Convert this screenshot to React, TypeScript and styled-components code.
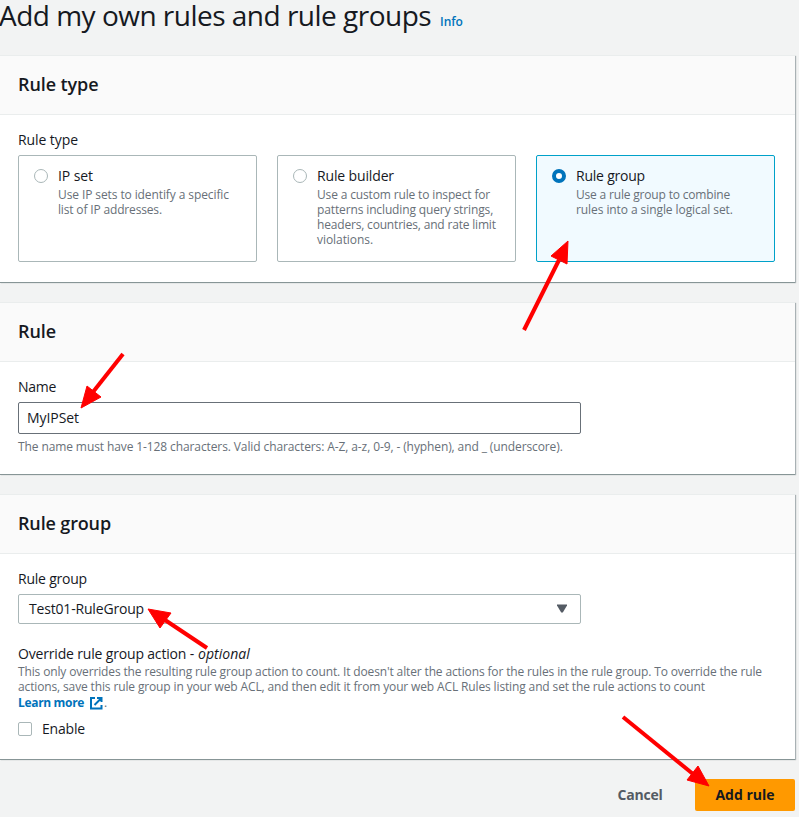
import React from "react";
import styled, { createGlobalStyle } from "styled-components";

const GlobalStyle = createGlobalStyle`
  *, *::before, *::after { box-sizing: border-box; }
  html, body { margin: 0; padding: 0; background: #f2f3f3; overflow: hidden; }
  body {
    color: #16191f;
    font-family: "Open Sans", "Noto Sans", sans-serif;
    font-size: 14px;
    line-height: 22px;
  }
  h1, h2, p { margin: 0; }
`;

const Page = styled.main`
  position: relative;
  width: 799px;
  height: 817px;
  overflow: hidden;
`;

const Track = styled.span<{ $ls: number }>`
  letter-spacing: ${(p) => p.$ls}px;
  white-space: nowrap;
`;

const TitleRow = styled.header`
  display: flex;
  align-items: baseline;
  gap: 9px;
  height: 55px;
  margin-left: -1px;
`;

const PageTitle = styled.h1`
  font-size: 28px;
  font-weight: 400;
  line-height: 31px;
`;

const InfoLink = styled.a`
  color: #0073bb;
  font-size: 12px;
  font-weight: 600;
`;

const Panels = styled.div`
  display: flex;
  flex-direction: column;
  gap: 20px;
  width: 795px;
`;

const Panel = styled.section<{ $height: number }>`
  height: ${(p) => p.$height}px;
  background: #fff;
  border-top: 1px solid #eaeded;
  box-shadow: 0 1px 0 0 #879596, 1px 1px 1px 0 rgba(0, 28, 36, 0.3);
`;

const PanelHeader = styled.div`
  display: flex;
  align-items: center;
  height: 59px;
  padding: 0 18px 2px;
  background: #fafafa;
  border-bottom: 1px solid #eaeded;
`;

const PanelTitle = styled.h2`
  font-size: 18px;
  font-weight: 600;
  line-height: 22px;
`;

const PanelBody = styled.div`
  padding: 14px 20px 0 18px;
`;

const Label = styled.div`
  height: 22px;
  margin-bottom: 4px;
`;

const Tiles = styled.div`
  display: grid;
  grid-template-columns: repeat(3, 239px);
  gap: 20px;
`;

const Tile = styled.label<{ $selected?: boolean }>`
  display: flex;
  gap: 10px;
  height: 107px;
  padding: 9px 15px;
  border: 1px solid ${(p) => (p.$selected ? "#00a1c9" : "#aab7b8")};
  border-radius: 2px;
  background: ${(p) => (p.$selected ? "#f1faff" : "#fff")};
`;

const Radio = styled.span<{ $selected?: boolean }>`
  flex: none;
  width: 14px;
  height: 14px;
  margin-top: 4px;
  border-radius: 50%;
  background: #fff;
  border: ${(p) => (p.$selected ? "4px solid #0073bb" : "1px solid #aab7b8")};
`;

const TileText = styled.div`
  display: flex;
  flex-direction: column;
`;

const Description = styled.p`
  display: flex;
  flex-direction: column;
  color: #687078;
  font-size: 12px;
  line-height: 15px;
`;

const OverrideDescription = styled(Description)`
  margin-top: -1px;
`;

const Input = styled.div`
  display: flex;
  align-items: center;
  width: 563px;
  height: 32px;
  padding: 0 8px;
  border: 1px solid #687078;
  border-radius: 2px;
`;

const Hint = styled(Description)`
  margin-top: 5px;
`;

const Select = styled.div`
  display: flex;
  align-items: center;
  justify-content: space-between;
  width: 563px;
  height: 30px;
  padding: 0 13px 0 10px;
  border: 1px solid #aab7b8;
  border-radius: 2px;
`;

const Caret = styled.svg`
  margin-bottom: 1px;
`;

const OverrideField = styled.div`
  margin-top: 19px;
`;

const OverrideLabel = styled.div`
  display: flex;
  gap: 4px;
  height: 22px;
`;

const LearnRow = styled.div`
  display: flex;
  align-items: center;
  gap: 1px;
  height: 15px;
  margin-top: 1px;
  color: #687078;
  font-size: 12px;
`;

const LearnLink = styled.a`
  display: flex;
  align-items: center;
  gap: 5px;
  color: #0073bb;
  font-weight: 700;
`;

const CheckRow = styled.label`
  display: flex;
  align-items: center;
  gap: 10px;
  height: 22px;
  margin-top: 8px;
`;

const Checkbox = styled.span`
  width: 14px;
  height: 14px;
  border: 1px solid #aab7b8;
  border-radius: 2px;
  background: #fff;
`;

const Actions = styled.footer`
  display: flex;
  justify-content: flex-end;
  gap: 9px;
  width: 795px;
  margin-top: 20px;
`;

const Button = styled.button<{ $primary?: boolean }>`
  height: 32px;
  width: ${(p) => (p.$primary ? 100 : 92)}px;
  padding: 0;
  border: 0;
  border-radius: 2px;
  background: ${(p) => (p.$primary ? "#ff9900" : "transparent")};
  color: ${(p) => (p.$primary ? "#16191f" : "#545b64")};
  font: 700 14px/22px "Open Sans", "Noto Sans", sans-serif;
`;

const Arrows = styled.svg`
  position: absolute;
  inset: 0;
  pointer-events: none;
`;

type Line = [text: string, spacing: number];

const Lines = ({ lines }: { lines: Line[] }) => (
  <>
    {lines.map(([text, ls]) => (
      <Track key={text} $ls={ls}>{text}</Track>
    ))}
  </>
);

const ruleTypes: { name: Line; lines: Line[]; selected?: boolean }[] = [
  {
    name: ["IP set", -0.08],
    lines: [["Use IP sets to identify a specific", -0.1], ["list of IP addresses.", -0.16]],
  },
  {
    name: ["Rule builder", -0.14],
    lines: [
      ["Use a custom rule to inspect for", -0.15],
      ["patterns including query strings,", -0.13],
      ["headers, countries, and rate limit", -0.18],
      ["violations.", -0.06],
    ],
  },
  {
    name: ["Rule group", -0.22],
    lines: [["Use a rule group to combine", -0.18], ["rules into a single logical set.", -0.08]],
    selected: true,
  },
];

const arrows = [
  { tail: [524, 330], neck: [559, 260], head: "568,241 551,256 567,264" },
  { tail: [123, 354], neck: [93, 392], head: "81,408 87,386 101,397" },
  { tail: [207, 648], neck: [165, 620], head: "148,609 171,613 160,628" },
  { tail: [623, 717], neck: [693, 774], head: "709,786 687,780 698,766" },
];

export default function App() {
  return (
    <Page>
      <GlobalStyle />
      <TitleRow>
        <PageTitle><Track $ls={-0.51}>Add my own rules and rule groups</Track></PageTitle>
        <InfoLink><Track $ls={-0.1}>Info</Track></InfoLink>
      </TitleRow>

      <Panels>
        <Panel $height={227}>
          <PanelHeader><PanelTitle><Track $ls={-0.1}>Rule type</Track></PanelTitle></PanelHeader>
          <PanelBody>
            <Label><Track $ls={-0.08}>Rule type</Track></Label>
            <Tiles>
              {ruleTypes.map(({ name, lines, selected }) => (
                <Tile key={name[0]} $selected={selected}>
                  <Radio $selected={selected} />
                  <TileText>
                    <Track $ls={name[1]}>{name[0]}</Track>
                    <Description><Lines lines={lines} /></Description>
                  </TileText>
                </Tile>
              ))}
            </Tiles>
          </PanelBody>
        </Panel>

        <Panel $height={172}>
          <PanelHeader><PanelTitle><Track $ls={-0.08}>Rule</Track></PanelTitle></PanelHeader>
          <PanelBody>
            <Label><Track $ls={-0.3}>Name</Track></Label>
            <Input><Track $ls={-0.07}>MyIPSet</Track></Input>
            <Hint>
              <Track $ls={-0.105}>
                The name must have 1-128 characters. Valid characters: A-Z, a-z, 0-9, - (hyphen), and _ (underscore).
              </Track>
            </Hint>
          </PanelBody>
        </Panel>

        <Panel $height={265}>
          <PanelHeader><PanelTitle><Track $ls={-0.14}>Rule group</Track></PanelTitle></PanelHeader>
          <PanelBody>
            <Label><Track $ls={-0.22}>Rule group</Track></Label>
            <Select>
              <Track $ls={-0.18}>Test01-RuleGroup</Track>
              <Caret width="10" height="9" viewBox="0 0 10 9"><path d="M0 .5h10v1L5.8 8.5H4.2L0 1.5z" fill="#545b64" /></Caret>
            </Select>
            <OverrideField>
              <OverrideLabel>
                <Track $ls={-0.17}>Override rule group action -</Track>
                <Track as="em" $ls={0.02}>optional</Track>
              </OverrideLabel>
              <OverrideDescription>
                <Lines
                  lines={[
                    ["This only overrides the resulting rule group action to count. It doesn't alter the actions for the rules in the rule group. To override the rule", -0.14],
                    ["actions, save this rule group in your web ACL, and then edit it from your web ACL Rules listing and set the rule actions to count", -0.135],
                  ]}
                />
              </OverrideDescription>
              <LearnRow>
                <LearnLink>
                  <Track $ls={-0.33}>Learn more</Track>
                  <svg width="14" height="14" viewBox="0 0 14 14" fill="none" stroke="#0073bb" strokeWidth="2">
                    <path d="M6 2H2v10.5h10.5V9M8 2h4.5v4M12 2.5 5.5 9" />
                  </svg>
                </LearnLink>
                <Track $ls={0}>.</Track>
              </LearnRow>
              <CheckRow><Checkbox /><Track $ls={-0.18}>Enable</Track></CheckRow>
            </OverrideField>
          </PanelBody>
        </Panel>
      </Panels>

      <Actions>
        <Button><Track $ls={-0.22}>Cancel</Track></Button>
        <Button $primary><Track $ls={-0.01}>Add rule</Track></Button>
      </Actions>

      <Arrows width="799" height="817" viewBox="0 0 799 817" stroke="#f00" fill="#f00">
        {arrows.map(({ tail, neck, head }) => (
          <g key={head}>
            <path d={`M${tail.join(" ")}L${neck.join(" ")}`} strokeWidth="4" />
            <polygon points={head} strokeWidth="1" />
          </g>
        ))}
      </Arrows>
    </Page>
  );
}
